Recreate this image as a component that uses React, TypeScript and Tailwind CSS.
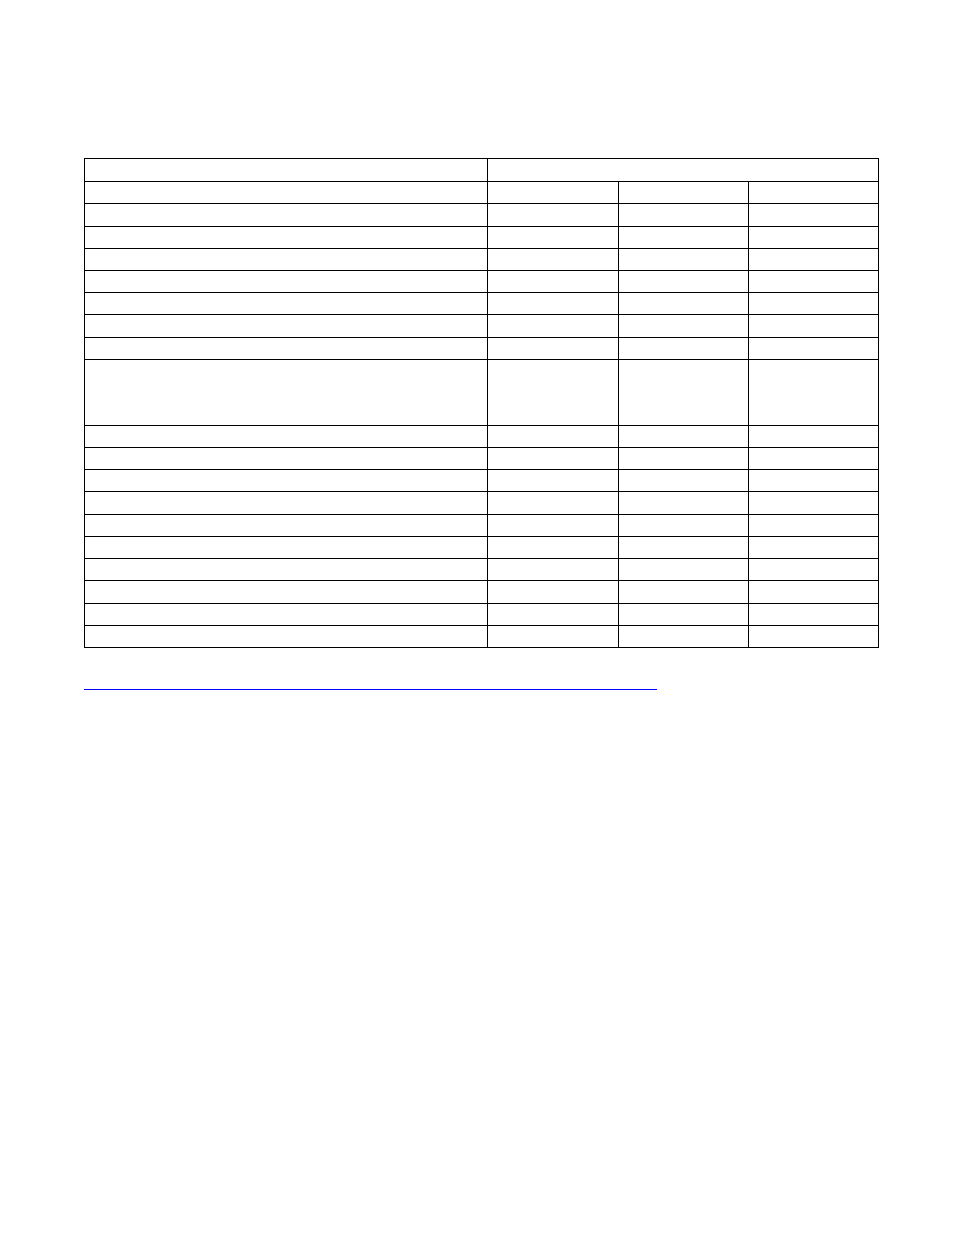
const rowHeights = [23, 22, 23, 22, 22, 22, 22, 23, 22, 66, 22, 22, 22, 23, 22, 22, 22, 23, 22, 22];

export default function App() {
  return (
    <div className="min-h-[1235px] w-[954px] bg-white pt-[158px] pl-[84px] font-['Liberation_Serif',serif] text-black">
      <table className="w-[794px] table-fixed border-collapse">
        <colgroup>
          <col className="w-[403px]" />
          <col className="w-[131px]" />
          <col className="w-[130px]" />
          <col className="w-[130px]" />
        </colgroup>
        <tbody>
          {rowHeights.map((h, i) => (
            <tr key={i} style={{ height: h }}>
              <td className="border border-black p-0" />
              {i === 0 ? (
                <td colSpan={3} className="border border-black p-0" />
              ) : (
                <>
                  <td className="border border-black p-0" />
                  <td className="border border-black p-0" />
                  <td className="border border-black p-0" />
                </>
              )}
            </tr>
          ))}
        </tbody>
      </table>
      <div className="mt-[41px] h-px w-[573px] bg-[#0000ff]" />
    </div>
  );
}
